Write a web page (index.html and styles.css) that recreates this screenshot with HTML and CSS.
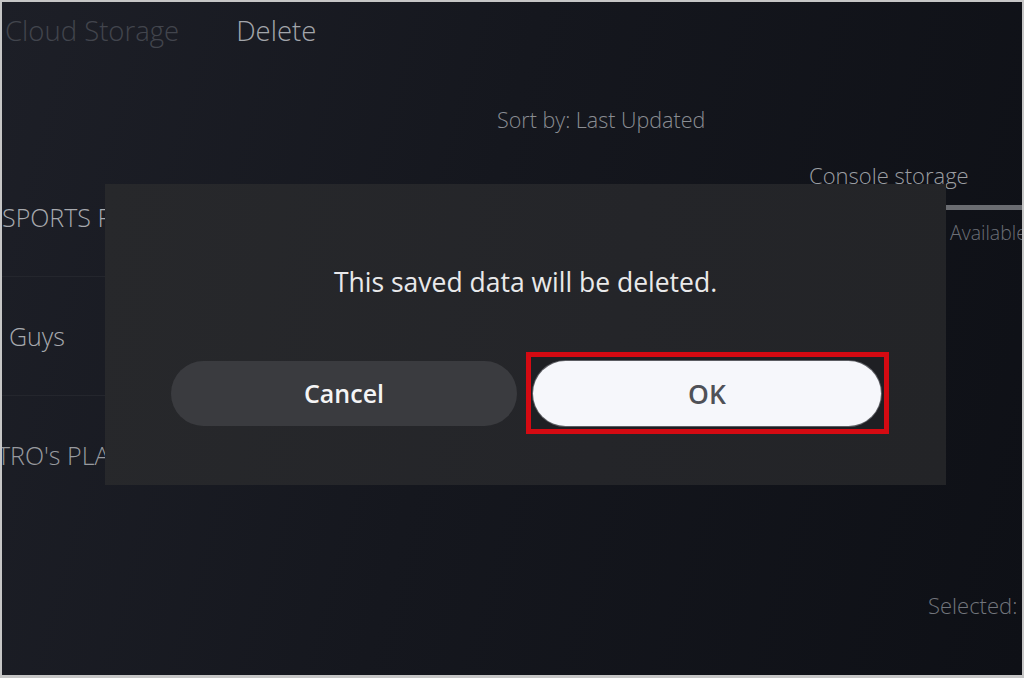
FILE: index.html
```html
<!DOCTYPE html>
<html lang="en">
<head>
    <meta charset="UTF-8">
    <meta name="viewport" content="width=device-width, initial-scale=1.0">
    <title>Saved Data - Delete</title>
    <link rel="stylesheet" href="styles.css">
</head>
<body>
    <div class="screen">
        <div class="tabs">
            <span class="tab">Cloud Storage</span>
            <span class="tab active">Delete</span>
        </div>

        <div class="sort-row">Sort by: Last Updated</div>

        <div class="content">
            <ul class="game-list">
                <li class="game first">SPORTS FC™ 24</li>
                <li class="game second">Guys</li>
                <li class="game third">TRO's PLAY</li>
            </ul>

            <div class="storage">
                <div class="storage-title">Console storage</div>
                <div class="storage-bar"></div>
                <div class="storage-available">Available</div>
            </div>
        </div>

        <div class="footer">Selected:</div>

        <div class="dialog">
            <p class="dialog-message">This saved data will be deleted.</p>
            <div class="dialog-buttons">
                <button class="btn btn-cancel">Cancel</button>
                <span class="highlight">
                    <button class="btn btn-ok">OK</button>
                </span>
            </div>
        </div>
    </div>
</body>
</html>
```

FILE: styles.css
```css
body {
    margin: 0;
    font-family: 'Open Sans', 'Noto Sans', sans-serif;
    background-color: #c6c6c6;
}

.screen {
    position: relative;
    width: 1024px;
    height: 678px;
    box-sizing: border-box;
    border: 2px solid #c6c6c6;
    border-bottom-width: 3px;
    background: linear-gradient(105deg, #1d1f27 0%, #15171e 45%, #0e1016 100%);
    display: flex;
    flex-direction: column;
    overflow: hidden;
}

.tabs {
    display: flex;
    gap: 57px;
    padding: 11px 0 0 3px;
    font-size: 27.5px;
    line-height: 36px;
    font-weight: 300;
}

.tab {
    color: #42454d;
}

.tab.active {
    color: #a3a6ab;
}

.sort-row {
    margin-top: 57px;
    padding-left: 495px;
    font-size: 21.5px;
    line-height: 28px;
    font-weight: 300;
    color: #8a8d93;
}

.content {
    display: grid;
    grid-template-columns: 807px 1fr;
    margin-top: 24px;
}

.game-list {
    list-style: none;
    margin: 0;
    padding: 0;
}

.game {
    height: 118px;
    display: flex;
    align-items: center;
    border-bottom: 1px solid #24262d;
    font-size: 25px;
    font-weight: 300;
    color: #a7a9ae;
    white-space: nowrap;
}

.game.first {
    padding-left: 0;
}

.game.second {
    padding-left: 7px;
}

.game.third {
    margin-left: -5px;
    border-bottom: none;
    color: #989a9f;
}

.storage {
    padding-top: 3px;
}

.storage-title {
    font-size: 22px;
    line-height: 28px;
    font-weight: 300;
    color: #9b9ea2;
}

.storage-bar {
    margin: 16px 0 0 137px;
    height: 5px;
    background-color: #6a6c71;
}

.storage-available {
    margin: 11px 0 0 141px;
    font-size: 19.5px;
    line-height: 24px;
    font-weight: 300;
    color: #6c6f77;
}

.footer {
    margin-top: auto;
    padding: 0 0 57px 926px;
    font-size: 22px;
    line-height: 26px;
    font-weight: 300;
    color: #72757c;
    white-space: nowrap;
}

.dialog {
    position: absolute;
    left: 103px;
    top: 182px;
    width: 841px;
    height: 301px;
    box-sizing: border-box;
    padding-top: 82px;
    background: linear-gradient(100deg, #27282b, #242529 60%, #232427);
}

.dialog-message {
    margin: 0;
    text-align: center;
    font-size: 26.5px;
    line-height: 32px;
    color: #e9e9ea;
}

.dialog-buttons {
    display: flex;
    align-items: center;
    gap: 9px;
    margin-top: 54px;
    padding: 0 57px 0 66px;
}

.btn {
    border: none;
    border-radius: 33px;
    height: 65px;
    font-family: inherit;
    font-weight: 600;
    cursor: pointer;
}

.btn-cancel {
    width: 346px;
    font-size: 25px;
    background-color: #3a3b3f;
    color: #f4f4f5;
}

.highlight {
    display: block;
    border: 5px solid #d40a12;
    padding: 4px 3px 3px 2px;
    background-color: #1e1f23;
}

.btn-ok {
    display: block;
    width: 348px;
    font-size: 26.5px;
    background-color: #f6f7fb;
    color: #4f5157;
    box-shadow: 0 0 0 1px #5c5d62;
}
```
